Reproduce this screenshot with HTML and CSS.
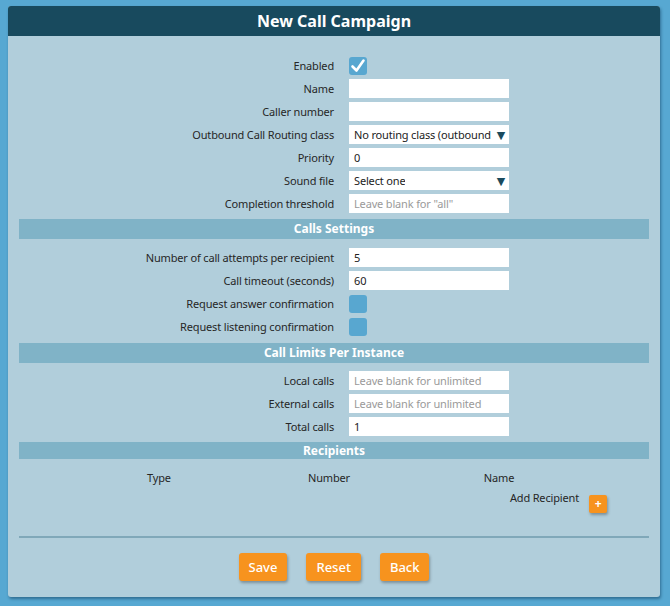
FILE: index.html
```html
<!DOCTYPE html>
<html>
<head>
<meta charset="utf-8">
<link rel="stylesheet" href="styles.css">
</head>
<body>
<div class="panel">
  <div class="panel-title">New Call Campaign</div>
  <div class="panel-body">
    <div class="form">
      <div class="label">Enabled</div>
      <div class="field"><span class="check on"><svg viewBox="0 0 18 18" width="18" height="18"><path d="M3.5 9.5 L7.5 13.5 L14.5 3.5" fill="none" stroke="#fff" stroke-width="2.6" stroke-linecap="round" stroke-linejoin="round"/></svg></span></div>
      <div class="label">Name</div>
      <div class="field"><span class="input"></span></div>
      <div class="label">Caller number</div>
      <div class="field"><span class="input"></span></div>
      <div class="label">Outbound Call Routing class</div>
      <div class="field"><span class="input select"><span class="sel-text">No routing class (outbound</span><span class="arrow">▼</span></span></div>
      <div class="label">Priority</div>
      <div class="field"><span class="input">0</span></div>
      <div class="label">Sound file</div>
      <div class="field"><span class="input select"><span class="sel-text">Select one</span><span class="arrow">▼</span></span></div>
      <div class="label">Completion threshold</div>
      <div class="field"><span class="input ph">Leave blank for "all"</span></div>
    </div>
    <div class="section">Calls Settings</div>
    <div class="form">
      <div class="label">Number of call attempts per recipient</div>
      <div class="field"><span class="input">5</span></div>
      <div class="label">Call timeout (seconds)</div>
      <div class="field"><span class="input">60</span></div>
      <div class="label">Request answer confirmation</div>
      <div class="field"><span class="check"></span></div>
      <div class="label">Request listening confirmation</div>
      <div class="field"><span class="check"></span></div>
    </div>
    <div class="section mid">Call Limits Per Instance</div>
    <div class="form">
      <div class="label">Local calls</div>
      <div class="field"><span class="input ph">Leave blank for unlimited</span></div>
      <div class="label">External calls</div>
      <div class="field"><span class="input ph">Leave blank for unlimited</span></div>
      <div class="label">Total calls</div>
      <div class="field"><span class="input">1</span></div>
    </div>
    <div class="section small">Recipients</div>
    <div class="recipients">
      <div class="rh">Type</div>
      <div class="rh">Number</div>
      <div class="rh">Name</div>
      <div class="rh"></div>
      <div></div>
      <div></div>
      <div class="add-label">Add Recipient</div>
      <div class="add-cell"><span class="plus">+</span></div>
    </div>
    <div class="divider"></div>
    <div class="actions">
      <span class="btn">Save</span>
      <span class="btn">Reset</span>
      <span class="btn">Back</span>
    </div>
  </div>
</div>
</body>
</html>
```
FILE: styles.css
```css
html, body {
  margin: 0;
  padding: 0;
}
body {
  background: #57a8d2;
  font-family: "Noto Sans", "DejaVu Sans", sans-serif;
  color: #262626;
  width: 670px;
  height: 606px;
  overflow: hidden;
}
.panel {
  margin: 6px 0 0 8px;
  width: 652px;
  height: 591px;
  background: #b1cedb;
  border-radius: 3px;
  box-shadow: 1px 2px 3px rgba(0, 40, 70, 0.45);
  overflow: hidden;
}
.panel-title {
  height: 30px;
  line-height: 30px;
  background: #184a5e;
  color: #fff;
  text-align: center;
  font-weight: bold;
  font-size: 16px;
}
.panel-body {
  padding: 18px 11px 0 11px;
}
.form {
  display: grid;
  grid-template-columns: 315px 315px;
  grid-auto-rows: 23px;
}
.label {
  text-align: right;
  font-size: 11px;
  line-height: 23px;
  letter-spacing: -0.16px;
  white-space: nowrap;
}
.field {
  padding-left: 15px;
  display: flex;
  align-items: center;
}
.input {
  width: 160px;
  height: 19px;
  background: #fff;
  box-sizing: border-box;
  padding: 0 5px;
  font-size: 11px;
  letter-spacing: -0.16px;
  line-height: 19px;
  color: #222;
  display: flex;
  align-items: center;
  white-space: nowrap;
  overflow: hidden;
}
.input.ph {
  color: #9a9a9a;
}
.select {
  justify-content: space-between;
  padding-right: 4px;
}
.sel-text {
  overflow: hidden;
  white-space: nowrap;
}
.arrow {
  color: #1a4a5e;
  font-size: 11px;
  margin-left: 3px;
  flex: none;
}
.check {
  width: 18px;
  height: 18px;
  border-radius: 3px;
  background: #58a7d0;
  display: block;
}
.check svg {
  display: block;
}
.section {
  margin: 4px 0 7px 0;
  height: 20px;
  line-height: 20px;
  background: #80b3c7;
  color: #fff;
  font-weight: bold;
  font-size: 12px;
  text-align: center;
}
.section.mid {
  margin-top: 5px;
  margin-bottom: 6px;
}
.section.small {
  height: 17px;
  line-height: 17px;
  margin-bottom: 0;
}
.recipients {
  display: grid;
  grid-template-columns: 170px 170px 170px 40px;
  padding-left: 55px;
  padding-top: 10px;
  font-size: 11px;
  letter-spacing: -0.16px;
}
.rh {
  text-align: center;
  height: 18px;
  line-height: 18px;
}
.add-label {
  text-align: right;
  padding-right: 5px;
  line-height: 18px;
  padding-top: 2px;
}
.add-cell {
  padding-left: 5px;
  padding-top: 8px;
}
.plus {
  display: block;
  width: 18px;
  height: 18px;
  border-radius: 2px;
  background: #f7931e;
  color: #fff;
  font-weight: bold;
  font-size: 12px;
  line-height: 18px;
  text-align: center;
  box-shadow: 1px 2px 3px rgba(0, 0, 0, 0.3);
}
.divider {
  margin-top: 23px;
  height: 2px;
  background: #80a8b9;
}
.actions {
  display: flex;
  justify-content: center;
  gap: 19px;
  padding-top: 15px;
}
.btn {
  height: 28px;
  line-height: 28px;
  padding: 0 10px;
  background: #f7931e;
  color: #fff;
  font-size: 13px;
  font-weight: 500;
  border-radius: 3px;
  box-shadow: 1px 2px 3px rgba(0, 0, 0, 0.3);
}
```
